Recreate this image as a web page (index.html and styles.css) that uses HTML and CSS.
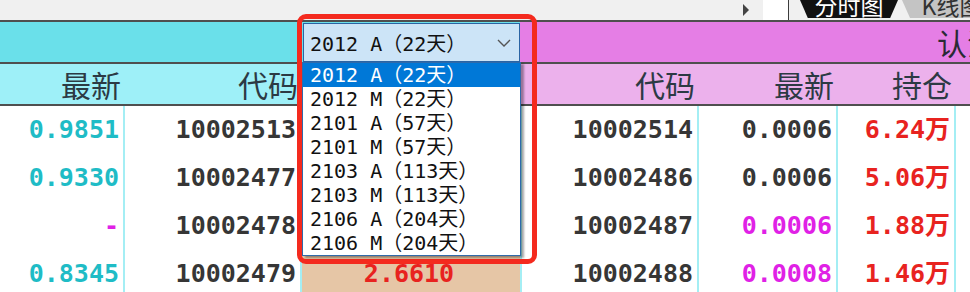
FILE: index.html
```html
<!DOCTYPE html>
<html lang="zh-CN">
<head>
  <meta charset="UTF-8">
  <meta name="viewport" content="width=device-width, initial-scale=1.0">
  <title>期权T型报价</title>
  <link rel="stylesheet" href="styles.css">
</head>
<body>

  <div class="page">
    <div class="topbar">
      <span class="arrow"></span>
      <span class="blank"></span>
      <span class="tab tab-on">分时图</span>
      <span class="tab">K线图</span>
    </div>

    <div class="quote">
      <div class="grp grp-call"></div>
      <div class="grp grp-put">认沽</div>

      <div class="hd hd-call">最新</div>
      <div class="hd hd-call">代码</div>
      <div class="hd hd-call"></div>
      <div class="hd hd-put">代码</div>
      <div class="hd hd-put">最新</div>
      <div class="hd hd-put">持仓</div>
      <div class="hd hd-put"></div>

      <div class="cell cyan">0.9851</div>
      <div class="cell">10002513</div>
      <div class="cell strike"></div>
      <div class="cell">10002514</div>
      <div class="cell">0.0006</div>
      <div class="cell red">6.24万</div>
      <div class="cell"></div>

      <div class="cell cyan">0.9330</div>
      <div class="cell">10002477</div>
      <div class="cell strike"></div>
      <div class="cell">10002486</div>
      <div class="cell">0.0006</div>
      <div class="cell red">5.06万</div>
      <div class="cell"></div>

      <div class="cell pink">-</div>
      <div class="cell">10002478</div>
      <div class="cell strike"></div>
      <div class="cell">10002487</div>
      <div class="cell pink">0.0006</div>
      <div class="cell red">1.88万</div>
      <div class="cell"></div>

      <div class="cell cyan">0.8345</div>
      <div class="cell">10002479</div>
      <div class="cell strike red">2.6610</div>
      <div class="cell">10002488</div>
      <div class="cell pink">0.0008</div>
      <div class="cell red">1.46万</div>
      <div class="cell"></div>
    </div>
  </div>

  <!-- 月份下拉框（红框标注） -->
  <div class="picker">
    <div class="select">
      <span>2012 A（22天）</span>
      <svg class="chevron" width="14" height="8" viewBox="0 0 14 8">
        <polyline points="1,1 7,7 13,1" fill="none" stroke="#555" stroke-width="1.4"/>
      </svg>
    </div>
    <ul class="options">
      <li class="on">2012 A（22天）</li>
      <li>2012 M（22天）</li>
      <li>2101 A（57天）</li>
      <li>2101 M（57天）</li>
      <li>2103 A（113天）</li>
      <li>2103 M（113天）</li>
      <li>2106 A（204天）</li>
      <li>2106 M（204天）</li>
    </ul>
  </div>

</body>
</html>
```

FILE: styles.css
```css
body {
  margin: 0;
  background: #fff;
  overflow: hidden;
  font-family: "Noto Sans CJK SC", sans-serif;
}
.page {
  width: 1414px;
}

/* 顶部工具栏 */
.topbar {
  display: flex;
  align-items: center;
  height: 20px;
  background: #f0f0f0;
  border-bottom: 2px solid #4f4f4f;
}
.arrow {
  margin-left: 743px;
  width: 0;
  height: 0;
  border-left: 6px solid #444;
  border-top: 6px solid transparent;
  border-bottom: 6px solid transparent;
}
.blank {
  margin-left: 14px;
  width: 25px;
  height: 20px;
  background: #fff;
  border-right: 1px solid #3c3c3c;
}
.tab {
  height: 18px;
  align-self: flex-start;
  width: 100px;
  margin-left: 11px;
  background: #c4c4c4;
  color: #333;
  font-size: 23px;
  line-height: 10px;
  text-align: center;
  overflow: hidden;
  clip-path: polygon(0 0, 100% 0, 92% 100%, 8% 100%);
}
.tab-on {
  width: 98px;
  background: #111;
  color: #fff;
}
.tab-on + .tab {
  margin-left: 4px;
}

/* T型报价表 */
.quote {
  display: grid;
  grid-template-columns: 123px 177px 220px 177px 139px 118px 460px;
  grid-template-rows: 42px 42px;
  grid-auto-rows: 48px;
}
.grp {
  font-size: 30px;
  line-height: 40px;
  color: #2a2a35;
  text-align: center;
  border-bottom: 2px solid #4f4f4f;
}
.grp-call {
  grid-column: 1 / 4;
  background: #6ae0ea;
}
.grp-put {
  grid-column: 4 / 8;
  background: #e57ee5;
}
.hd {
  font-size: 30px;
  line-height: 40px;
  color: #2c3a44;
  text-align: right;
  padding-right: 2px;
  border-bottom: 2px solid #4f4f4f;
}
.hd-call {
  background: #9ef0f8;
}
.hd-put {
  background: #ecb1ec;
}
.cell {
  font-family: "DejaVu Sans Mono", "Noto Sans CJK SC", monospace;
  font-weight: bold;
  font-size: 25px;
  line-height: 48px;
  color: #363636;
  text-align: right;
  padding-right: 4px;
  border-left: 2px solid #a4eef4;
}
.quote > .cell:nth-child(7n + 10) {
  border-left: none;
}
.strike {
  text-align: center;
  background: #e6c6a6;
}
.cyan { color: #1fbcc6; }
.pink { color: #e021e6; }
.red { color: #e8231f; }

/* 下拉框 */
.picker {
  position: absolute;
  left: 297px;
  top: 14px;
  width: 240px;
  height: 250px;
  box-sizing: border-box;
  border: 5px solid #f42a1e;
  border-radius: 9px;
  padding-top: 4px;
  font-family: "DejaVu Sans Mono", "Noto Sans CJK SC", monospace;
  font-size: 20px;
}
.select {
  display: flex;
  align-items: center;
  justify-content: space-between;
  margin-left: 1px;
  width: 217px;
  height: 39px;
  box-sizing: border-box;
  padding: 0 8px 0 6px;
  background: #cce4f7;
  border: 1px solid #2a64a4;
  color: #111;
}
.options {
  list-style: none;
  margin: 0;
  padding: 0;
  width: 219px;
  box-sizing: border-box;
  background: #fff;
  border: 1px solid #2f6aaa;
  box-shadow: 3px 2px 2px rgba(0, 0, 0, 0.35);
}
.options li {
  height: 24px;
  line-height: 24px;
  padding-left: 7px;
  color: #111;
  white-space: nowrap;
}
.options li.on {
  background: #0078d7;
  color: #fff;
}
```
